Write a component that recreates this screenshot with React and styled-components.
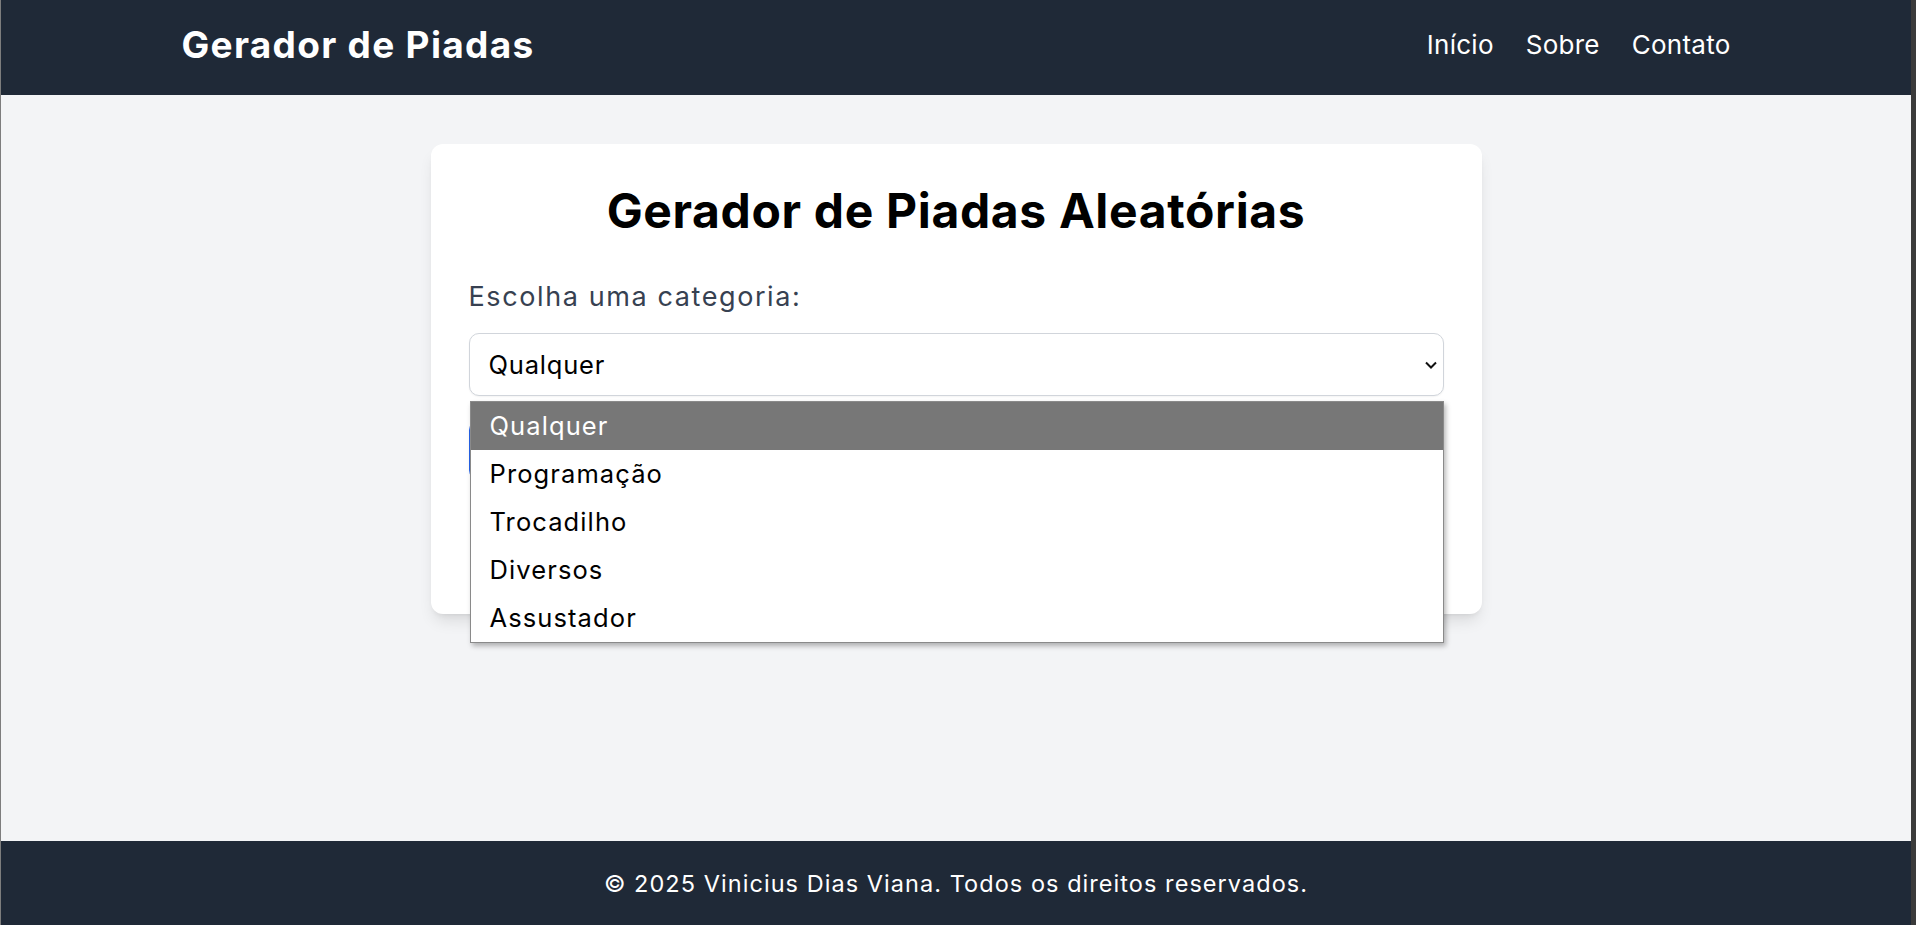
import React from "react";
import styled, { createGlobalStyle } from "styled-components";

const GlobalStyle = createGlobalStyle`
  html, body { margin: 0; padding: 0; }
  body {
    font-family: Inter, "Noto Sans", sans-serif;
    background: #f3f4f6;
    -webkit-font-smoothing: antialiased;
  }
  *, *::before, *::after { box-sizing: border-box; }
`;

const Page = styled.div`
  min-height: 100vh;
  display: flex;
  flex-direction: column;
  border-left: 1px solid #7d7d7d;
  border-right: 5px solid #3b3b3b;
  background: #f3f4f6;
`;

const Header = styled.header`
  background: #1f2937;
  height: 95px;
  display: flex;
  align-items: center;
  padding-bottom: 7px;
`;

const HeaderInner = styled.div`
  width: 100%;
  max-width: 1549px;
  margin: 0 auto;
  display: flex;
  justify-content: space-between;
  align-items: center;
`;

const Brand = styled.h1`
  margin: 0;
  color: #ffffff;
  font-size: 37px;
  font-weight: 700;
  letter-spacing: 1.3px;
`;

const Nav = styled.nav`
  display: flex;
  gap: 32px;
`;

const NavLink = styled.a`
  color: #ffffff;
  font-size: 26px;
  letter-spacing: 0.25px;
  text-decoration: none;
`;

const Main = styled.main`
  flex: 1;
  display: flex;
  justify-content: center;
  align-items: flex-start;
  padding-top: 49px;
`;

const Card = styled.section`
  width: 1051px;
  background: #ffffff;
  border-radius: 12px;
  padding: 40px 38px;
  box-shadow: 0 10px 15px -3px rgba(0, 0, 0, 0.1), 0 4px 6px -4px rgba(0, 0, 0, 0.1);
`;

const Title = styled.h2`
  margin: 0;
  text-align: center;
  color: #000000;
  font-size: 48px;
  line-height: 54px;
  font-weight: 700;
  letter-spacing: 0.65px;
`;

const Label = styled.label`
  display: block;
  margin-top: 42px;
  font-size: 27px;
  line-height: 34px;
  letter-spacing: 1.6px;
  color: #374151;
`;

const Field = styled.div`
  position: relative;
  margin-top: 19px;
`;

const SelectBox = styled.div`
  height: 63px;
  border: 1px solid #d1d5db;
  border-radius: 10px;
  padding: 0 5px 0 19px;
  display: flex;
  align-items: center;
  justify-content: space-between;
  font-size: 25.5px;
  letter-spacing: 0.8px;
  color: #000000;
  background: #ffffff;
  box-shadow: 0 1px 2px rgba(0, 0, 0, 0.05);
`;

const ListBox = styled.div`
  position: absolute;
  top: calc(100% + 5px);
  left: 1px;
  right: 0;
  z-index: 10;
  background: #ffffff;
  border: 1px solid #8a8a8a;
  box-shadow: 2px 3px 5px rgba(0, 0, 0, 0.28);
`;

const Option = styled.div`
  height: 48px;
  display: flex;
  align-items: center;
  padding: 0 0 2px 19px;
  font-size: 25.5px;
  letter-spacing: 1.1px;
  color: ${(p) => (p.$active ? "#ffffff" : "#000000")};
  background: ${(p) => (p.$active ? "#777777" : "#ffffff")};
`;

const Button = styled.button`
  display: block;
  width: 100%;
  height: 60px;
  margin-top: 24px;
  border: none;
  border-radius: 10px;
  background: #2563eb;
  color: #ffffff;
  font-family: inherit;
  font-size: 22px;
  font-weight: 600;
`;

const Joke = styled.p`
  margin: 24px 0 0;
  min-height: 70px;
  font-size: 20px;
  color: #374151;
  text-align: center;
`;

const Footer = styled.footer`
  background: #1f2937;
  color: #ffffff;
  height: 84px;
  display: flex;
  align-items: center;
  justify-content: center;
  font-size: 23.5px;
  letter-spacing: 1.05px;
`;

const Chevron = () => (
  <svg width="14" height="10" viewBox="0 0 14 10" aria-hidden="true">
    <path d="M2 2.5 L7 7.5 L12 2.5" fill="none" stroke="#111" strokeWidth="2" />
  </svg>
);

const options = ["Qualquer", "Programação", "Trocadilho", "Diversos", "Assustador"];

export default function App() {
  return (
    <>
      <GlobalStyle />
      <Page>
        <Header>
          <HeaderInner>
            <Brand>Gerador de Piadas</Brand>
            <Nav>
              <NavLink href="#">Início</NavLink>
              <NavLink href="#">Sobre</NavLink>
              <NavLink href="#">Contato</NavLink>
            </Nav>
          </HeaderInner>
        </Header>
        <Main>
          <Card>
            <Title>Gerador de Piadas Aleatórias</Title>
            <Label>Escolha uma categoria:</Label>
            <Field>
              <SelectBox>
                <span>Qualquer</span>
                <Chevron />
              </SelectBox>
              <ListBox role="listbox">
                {options.map((o, i) => (
                  <Option key={o} $active={i === 0} role="option">
                    {o}
                  </Option>
                ))}
              </ListBox>
            </Field>
            <Button>Gerar Piada</Button>
            <Joke>Clique no botão para gerar uma piada!</Joke>
          </Card>
        </Main>
        <Footer>© 2025 Vinicius Dias Viana. Todos os direitos reservados.</Footer>
      </Page>
    </>
  );
}
